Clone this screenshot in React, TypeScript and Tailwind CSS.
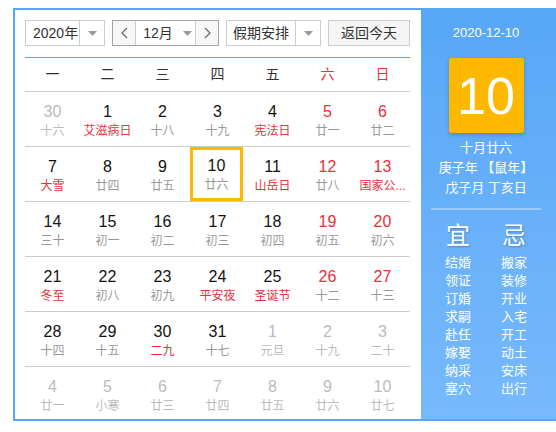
import React from "react";

type Day = { d: number; l: string; red?: boolean; hol?: boolean; other?: boolean; sel?: boolean };

const rows: Day[][] = [
  [
    { d: 30, l: "十六", other: true },
    { d: 1, l: "艾滋病日", hol: true },
    { d: 2, l: "十八" },
    { d: 3, l: "十九" },
    { d: 4, l: "宪法日", hol: true },
    { d: 5, l: "廿一", red: true },
    { d: 6, l: "廿二", red: true },
  ],
  [
    { d: 7, l: "大雪", hol: true },
    { d: 8, l: "廿四" },
    { d: 9, l: "廿五" },
    { d: 10, l: "廿六", sel: true },
    { d: 11, l: "山岳日", hol: true },
    { d: 12, l: "廿八", red: true },
    { d: 13, l: "国家公...", red: true, hol: true },
  ],
  [
    { d: 14, l: "三十" },
    { d: 15, l: "初一" },
    { d: 16, l: "初二" },
    { d: 17, l: "初三" },
    { d: 18, l: "初四" },
    { d: 19, l: "初五", red: true },
    { d: 20, l: "初六", red: true },
  ],
  [
    { d: 21, l: "冬至", hol: true },
    { d: 22, l: "初八" },
    { d: 23, l: "初九" },
    { d: 24, l: "平安夜", hol: true },
    { d: 25, l: "圣诞节", hol: true },
    { d: 26, l: "十二", red: true },
    { d: 27, l: "十三", red: true },
  ],
  [
    { d: 28, l: "十四" },
    { d: 29, l: "十五" },
    { d: 30, l: "二九", hol: true },
    { d: 31, l: "十七" },
    { d: 1, l: "元旦", other: true },
    { d: 2, l: "十九", other: true },
    { d: 3, l: "二十", other: true },
  ],
  [
    { d: 4, l: "廿一", other: true },
    { d: 5, l: "小寒", other: true },
    { d: 6, l: "廿三", other: true },
    { d: 7, l: "廿四", other: true },
    { d: 8, l: "廿五", other: true },
    { d: 9, l: "廿六", other: true },
    { d: 10, l: "廿七", other: true },
  ],
];

const weekdays = ["一", "二", "三", "四", "五", "六", "日"];
const yi = ["结婚", "领证", "订婚", "求嗣", "赴任", "嫁娶", "纳采", "塞穴"];
const ji = ["搬家", "装修", "开业", "入宅", "开工", "动土", "安床", "出行"];

function Caret() {
  return (
    <svg width="9" height="5" viewBox="0 0 9 5">
      <path d="M0 0h9L4.5 5z" fill="#999" />
    </svg>
  );
}

function Chevron({ right }: { right?: boolean }) {
  return (
    <svg width="7" height="12" viewBox="0 0 7 12">
      <path
        d={right ? "M1 1l5 5-5 5" : "M6 1L1 6l5 5"}
        fill="none"
        stroke="#666"
        strokeWidth="1.2"
      />
    </svg>
  );
}

function Cell({ day }: { day: Day }) {
  const num = day.other ? "text-[#bbb]" : day.red ? "text-[#e8303a]" : "text-[#111]";
  const lunar = day.other ? "text-[#bbb]" : day.hol ? "text-[#e8303a]" : "text-[#999]";
  const inner = (
    <>
      <span className={`text-[16px] leading-[20px] ${num}`}>{day.d}</span>
      <span className={`mt-[1px] whitespace-nowrap text-[12px] leading-[16px] ${lunar}`}>{day.l}</span>
    </>
  );
  if (day.sel) {
    return (
      <div className="flex">
        <div className="flex h-[54px] w-[53px] flex-col items-center border-[3px] border-[#ffb800] pt-[6px]">
          {inner}
        </div>
      </div>
    );
  }
  return <div className="flex flex-col items-center pt-[10px]">{inner}</div>;
}

export default function App() {
  return (
    <div
      className="h-[432px] w-[556px] overflow-hidden bg-white pl-[13px] pt-[8px]"
      style={{ fontFamily: '"Liberation Sans", "Noto Sans CJK SC", sans-serif' }}
    >
      <div className="flex h-[413px] border-y-2 border-l-2 border-[#57a7f7]">
        {/* calendar */}
        <div className="w-[406px] shrink-0 bg-white pl-[10px] pr-[11px] pt-[10px]">
          <div className="flex h-[26px] gap-[7px] text-[14px] text-[#333]">
            <div className="flex w-[80px] border border-[#ccc]">
              <div className="flex flex-1 items-center whitespace-nowrap pl-[7px]">2020年</div>
              <div className="flex w-[25px] items-center justify-center border-l border-[#ccc]">
                <Caret />
              </div>
            </div>
            <div className="flex w-[107px] border border-[#a5a5a5]">
              <div className="flex w-[22px] items-center justify-center bg-[#f7f7f7]">
                <Chevron />
              </div>
              <div className="flex flex-1 items-center justify-center gap-[10px] border-x border-[#ccc] pl-[4px]">
                <span>12月</span>
                <Caret />
              </div>
              <div className="flex w-[22px] items-center justify-center bg-[#f7f7f7]">
                <Chevron right />
              </div>
            </div>
            <div className="flex w-[95px] border border-[#ccc]">
              <div className="flex flex-1 items-center justify-center whitespace-nowrap">假期安排</div>
              <div className="flex w-[25px] items-center justify-center border-l border-[#ccc]">
                <Caret />
              </div>
            </div>
            <div className="flex w-[82px] items-center justify-center whitespace-nowrap border border-[#ccc] bg-[#f5f5f5]">
              返回今天
            </div>
          </div>

          <div className="mt-[11px] h-px bg-[#57a7f7]" />

          <div className="grid h-[34px] grid-cols-7 border-b border-[#ccc] text-[14px]">
            {weekdays.map((w, i) => (
              <div
                key={w}
                className={`flex items-center justify-center ${i >= 5 ? "text-[#e8303a]" : "text-[#333]"}`}
              >
                {w}
              </div>
            ))}
          </div>

          {rows.map((r, i) => (
            <div
              key={i}
              className={`grid grid-cols-7 ${i < 5 ? "h-[55px] border-b border-[#ccc]" : "h-[53px]"}`}
            >
              {r.map((d, j) => (
                <Cell key={j} day={d} />
              ))}
            </div>
          ))}
        </div>

        {/* side panel */}
        <div className="flex flex-1 flex-col items-center bg-linear-to-b from-[#57a7f7] to-[#77b9fc] pr-[5px] pt-[15px] text-white">
          <div className="text-[13px] leading-[16px]">2020-12-10</div>
          <div className="mt-[17px] flex h-[75px] w-[75px] items-center justify-center rounded-[3px] bg-[#ffb800] text-[52px] leading-none shadow-[0_2px_4px_rgba(0,0,0,0.2)]">
            10
          </div>
          <div className="mt-[5px] text-center text-[13px] leading-[20px]">
            <div>十月廿六</div>
            <div>庚子年 【鼠年】</div>
            <div>戊子月 丁亥日</div>
          </div>
          <div className="mt-[10px] h-[2px] w-[110px] bg-white/35" />
          <div className="mt-[11px] grid w-[112px] grid-cols-2 text-center">
            <div className="text-[24px] leading-[30px] [text-shadow:1px_1px_2px_rgba(0,0,0,0.25)]">宜</div>
            <div className="text-[24px] leading-[30px] [text-shadow:1px_1px_2px_rgba(0,0,0,0.25)]">忌</div>
            <div className="mt-[3px] flex flex-col text-[13px] leading-[18px]">
              {yi.map((t) => (
                <span key={t}>{t}</span>
              ))}
            </div>
            <div className="mt-[3px] flex flex-col text-[13px] leading-[18px]">
              {ji.map((t) => (
                <span key={t}>{t}</span>
              ))}
            </div>
          </div>
        </div>
      </div>
    </div>
  );
}
